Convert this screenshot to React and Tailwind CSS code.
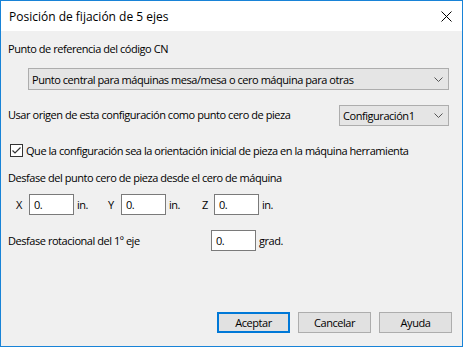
import React from "react";

const Chevron = () => (
  <svg width="9" height="5" viewBox="0 0 9 5" className="shrink-0">
    <polyline points="0.5,0.5 4.5,4.5 8.5,0.5" fill="none" stroke="#555" strokeWidth="1" />
  </svg>
);

const Input = ({ className = "" }) => (
  <div className={"h-[21px] w-[45px] bg-white border border-[#7a7a7a] flex items-center pl-[4px] " + className}>0.</div>
);

const Button = ({ children, primary }) => (
  <div
    className={
      "w-[73px] h-[21px] flex items-center justify-center bg-[#e1e1e1] " +
      (primary ? "border-2 border-[#0078d7]" : "border border-[#adadad]")
    }
  >
    {children}
  </div>
);

export default function App() {
  return (
    <div
      className="w-[463px] h-[347px] border border-[#1883d7] flex flex-col text-black text-[12px] leading-[15px]"
      style={{ fontFamily: "'Segoe UI', 'Open Sans', 'Noto Sans', sans-serif" }}
    >
      <div className="h-[30px] bg-white flex items-center justify-between pl-[8px] pr-[10px] shrink-0">
        <span className="text-[12px]">Posición de fijación de 5 ejes</span>
        <svg width="11" height="11" viewBox="0 0 11 11">
          <path d="M0.5 0.5 L10.5 10.5 M10.5 0.5 L0.5 10.5" stroke="#000" strokeWidth="1" />
        </svg>
      </div>
      <div className="flex-1 bg-[#f0f0f0] flex flex-col pl-[7px] pr-[13px] text-[11px] tracking-[-0.45px]">
        <div className="mt-[10px]">Punto de referencia del código CN</div>
        <div className="mt-[12px] ml-[20px] h-[22px] bg-[#e5e5e5] border border-[#adadad] flex items-center justify-between pl-[3px] pr-[5px]">
          <span>Punto central para máquinas mesa/mesa o cero máquina para otras</span>
          <Chevron />
        </div>
        <div className="mt-[15px] flex items-center justify-between">
          <span className="-mt-[3px]">Usar origen de esta configuración como punto cero de pieza</span>
          <div className="w-[110px] h-[21px] bg-[#e5e5e5] border border-[#adadad] flex items-center justify-between pl-[3px] pr-[5px]">
            <span>Configuración1</span>
            <Chevron />
          </div>
        </div>
        <div className="mt-[17px] flex items-center ml-[2px]">
          <div className="w-[13px] h-[13px] border border-[#333] bg-white flex items-center justify-center mr-[3px]">
            <svg width="11" height="11" viewBox="0 0 11 11">
              <polyline points="1.5,5.5 4,8 9.5,2.5" fill="none" stroke="#333" strokeWidth="1.2" />
            </svg>
          </div>
          <span>Que la configuración sea la orientación inicial de pieza en la máquina herramienta</span>
        </div>
        <div className="mt-[12px]">Desfase del punto cero de pieza desde el cero de máquina</div>
        <div className="mt-[9px] flex items-center">
          <span className="ml-[8px] w-[13px]">X</span>
          <Input />
          <span className="ml-[3px] w-[31px]">in.</span>
          <span className="w-[13px]">Y</span>
          <Input />
          <span className="ml-[3px] w-[33px]">in.</span>
          <span className="w-[12px]">Z</span>
          <Input />
          <span className="ml-[3px]">in.</span>
        </div>
        <div className="mt-[15px] flex items-center">
          <span className="w-[203px]">Desfase rotacional del 1º eje</span>
          <Input />
          <span className="ml-[3px]">grad.</span>
        </div>
        <div className="mt-auto mb-[13px] flex justify-end gap-[8px] -mr-[3px]">
          <Button primary>Aceptar</Button>
          <Button>Cancelar</Button>
          <Button>Ayuda</Button>
        </div>
      </div>
    </div>
  );
}
